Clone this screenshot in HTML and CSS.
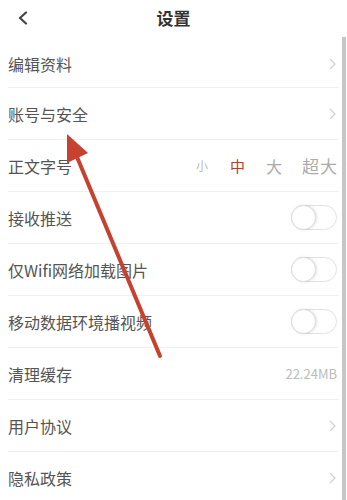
FILE: index.html
```html
<!DOCTYPE html>
<html lang="zh-CN">
<head>
<meta charset="utf-8">
<title>设置</title>
<link rel="stylesheet" href="styles.css">
</head>
<body>
<div class="page">
  <header class="topbar">
    <svg class="back" width="12" height="14" viewBox="0 0 12 14"><polyline points="9,1.5 3,7 9,12.5" fill="none" stroke="#444" stroke-width="2.2" stroke-linecap="round" stroke-linejoin="round"/></svg>
    <div class="title">设置</div>
  </header>
  <div class="list">
    <div class="row first"><span class="label">编辑资料</span><svg class="chev" width="7" height="12" viewBox="0 0 7 12"><polyline points="1,1 6,6 1,11" fill="none" stroke="#d0d0d0" stroke-width="1.2"/></svg></div>
    <div class="row"><span class="label">账号与安全</span><svg class="chev" width="7" height="12" viewBox="0 0 7 12"><polyline points="1,1 6,6 1,11" fill="none" stroke="#d0d0d0" stroke-width="1.2"/></svg></div>
    <div class="row"><span class="label">正文字号</span>
      <div class="sizes"><span class="s1">小</span><span class="s2 on">中</span><span class="s3">大</span><span class="s4">超大</span></div>
    </div>
    <div class="row"><span class="label">接收推送</span><span class="toggle"><span class="knob"></span></span></div>
    <div class="row"><span class="label">仅Wifi网络加载图片</span><span class="toggle"><span class="knob"></span></span></div>
    <div class="row"><span class="label">移动数据环境播视频</span><span class="toggle"><span class="knob"></span></span></div>
    <div class="row"><span class="label">清理缓存</span><span class="value">22.24MB</span></div>
    <div class="row"><span class="label">用户协议</span><svg class="chev" width="7" height="12" viewBox="0 0 7 12"><polyline points="1,1 6,6 1,11" fill="none" stroke="#d0d0d0" stroke-width="1.2"/></svg></div>
    <div class="row"><span class="label">隐私政策</span><svg class="chev" width="7" height="12" viewBox="0 0 7 12"><polyline points="1,1 6,6 1,11" fill="none" stroke="#d0d0d0" stroke-width="1.2"/></svg></div>
  </div>
  <div class="scrollbar"></div>
  <svg class="arrow" width="347" height="500" viewBox="0 0 347 500">
    <line x1="160" y1="356" x2="77" y2="157" stroke="#c8412f" stroke-width="4" stroke-linecap="round"/>
    <polygon points="67,134 88,153 67,163" fill="#c8412f"/>
  </svg>
</div>
</body>
</html>
```
FILE: styles.css
```css
html, body {
  margin: 0;
  padding: 0;
  background: #fff;
}
body {
  font-family: "Noto Sans CJK SC", "Noto Sans", sans-serif;
  color: #555;
  width: 347px;
  height: 500px;
  overflow: hidden;
}
.page {
  position: relative;
  width: 347px;
  height: 500px;
  overflow: hidden;
}
.topbar {
  height: 40px;
  display: flex;
  align-items: flex-start;
  position: relative;
}
.back {
  margin: 11px 0 0 17px;
}
.title {
  position: absolute;
  left: 0;
  right: 0;
  top: 6px;
  text-align: center;
  font-size: 17px;
  line-height: 24px;
  font-weight: 700;
  color: #333;
}
.list {
  display: flex;
  flex-direction: column;
}
.row {
  height: 51px;
  border-bottom: 1px solid #f0f0f0;
  margin: 0 8px 0 8px;
  padding-right: 2px;
  display: flex;
  align-items: center;
  justify-content: space-between;
}
.row.first {
  height: 47px;
}
.label {
  font-size: 16px;
  line-height: 20px;
  color: #555;
}
.chev {
  margin-right: 1px;
}
.sizes {
  display: flex;
  align-items: center;
  color: #aaa;
}
.sizes span {
  line-height: 20px;
}
.s1 { font-size: 12px; color: #bbb; margin-right: 22px; }
.s2 { font-size: 15px; margin-right: 21px; }
.s3 { font-size: 16px; margin-right: 20px; }
.s4 { font-size: 17px; letter-spacing: 1px; margin-right: -1px; }
.on { color: #c0392b; }
.value {
  font-size: 13px;
  color: #bbb;
}
.toggle {
  width: 46px;
  height: 25px;
  box-sizing: border-box;
  border: 1px solid #e2e2e2;
  border-radius: 13px;
  background: #fff;
  position: relative;
  display: block;
}
.knob {
  position: absolute;
  left: -1px;
  top: -1px;
  width: 25px;
  height: 25px;
  box-sizing: border-box;
  border-radius: 50%;
  border: 1px solid #dcdcdc;
  background: #fff;
  box-shadow: 1px 0 3px rgba(0,0,0,0.12);
}
.scrollbar {
  position: absolute;
  left: 342px;
  top: 37px;
  width: 4px;
  height: 470px;
  background: #c6c6c6;
}
.arrow {
  position: absolute;
  left: 0;
  top: 0;
}
```
